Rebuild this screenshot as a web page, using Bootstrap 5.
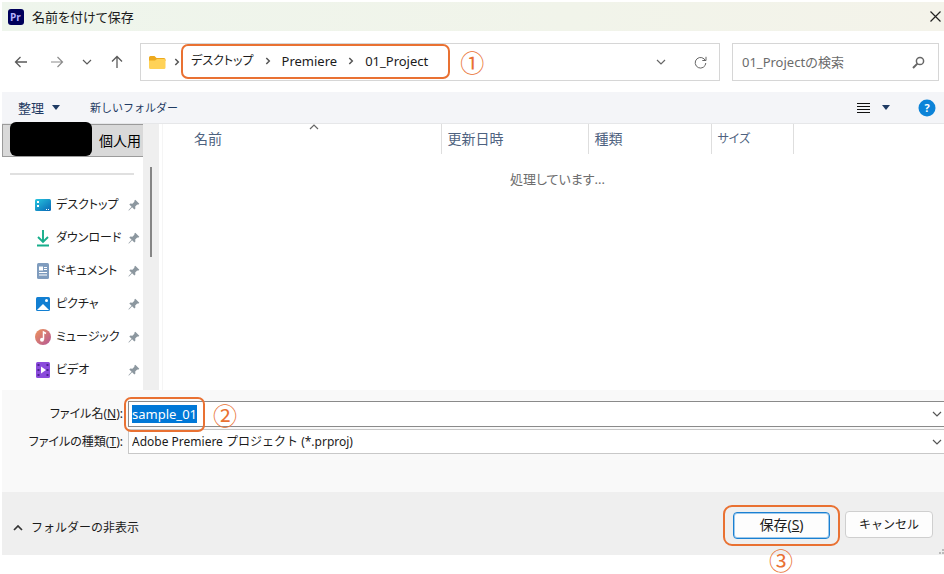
<!DOCTYPE html>
<html lang="ja">
<head>
<meta charset="utf-8">
<meta name="viewport" content="width=device-width, initial-scale=1">
<title>名前を付けて保存</title>
<link href="https://cdn.jsdelivr.net/npm/bootstrap@5.3.0/dist/css/bootstrap.min.css" rel="stylesheet">
<style>
  :root { --mark: #e97132; --navy: #1f3b63; --line: #d6d6d6; }
  body { font-family: "Noto Sans", "Noto Sans CJK JP", sans-serif; font-size: 14px; line-height: 20px; color: #1b1b1b; font-feature-settings: "palt"; background: #fff; }
  svg { display: block; flex: none; }
  .dialog { padding: 2px 0 19px 2px; }
  .title-bar { height: 29px; padding: 0 2px 0 6px; background: linear-gradient(90deg, #eef5ec, #f1f4ea 60%, #f4f3ea); }
  .title-bar h1 { font-size: 13px; line-height: 20px; }
  .tool { padding: 0; border: 0; background: none; color: inherit; line-height: 20px; }
  .kana { font-size: 12px; }
  .nav-row { padding: 12px 5px 11px 12px; gap: 12px; }
  .nav-arrows { width: 114px; gap: 18px; color: #5a5a5a; }
  .address, .search-box { height: 38px; border: 1px solid var(--line); }
  .address { padding: 0 12px 0 7px; color: #666; }
  .crumbs { height: 35px; margin: 0 10px 2px 1px; padding: 0 20px 0 8px; gap: 11px; border: 2px solid var(--mark); border-radius: 7px; list-style: none; font-size: 13px; }
  .crumbs a { color: #1b1b1b; text-decoration: none; }
  .step { color: var(--mark); font-size: 24px; line-height: 24px; font-weight: 400; font-family: "Noto Sans CJK JP", sans-serif; }
  .search-box { width: 207px; padding: 0 13px 0 9px; color: #6b6b6b; }
  .search-box input { min-width: 0; padding: 0; border: 0; outline: 0; background: none; color: inherit; font-size: 13px; }
  .search-box input::placeholder { color: #6b6b6b; opacity: 1; }
  .command-bar { height: 32px; padding: 0 8px 0 16px; background: #f4f5f8; border-bottom: 1px solid #e6e7e9; color: var(--navy); font-size: 13px; }
  .new-folder { margin-left: 30px; font-size: 11px; }
  .view-mode { gap: 12px; }
  .side { width: 141px; padding-bottom: 4px; }
  .account { height: 33px; padding: 0 0 0 96px; border: 1px solid #9b9b9b; border-right: 0; background: #d9d9d9; }
  .redaction { left: 8px; top: -2px; width: 82px; height: 34px; border-radius: 6px; background: #000; z-index: 1; }
  .side hr { margin: 16px 9px 13px 8px; border-top: 2px solid #e0e0e0; opacity: 1; }
  .place { height: 33px; padding: 0 3px 0 32px; gap: 4px; color: #1b1b1b; text-decoration: none; font-size: 12px; white-space: nowrap; }
  .track { width: 16px; background: #efefef; }
  .thumb { width: 2px; height: 90px; margin: 43px auto 0; background: #858585; }
  .files { margin: 0 0 0 3px; border-left: 1px solid #f5f5f5; }
  .file-table { table-layout: fixed; color: #4e6280; }
  .file-table th { height: 30px; padding: 0 6px; border-right: 1px solid #dedede; font-weight: 400; }
  .file-table th:first-child { padding-left: 31px; }
  .file-table th:last-child { border: 0; }
  .file-table td { padding: 15px 0 0 8px; color: #6d6d6d; font-size: 13px; }
  .c-name { width: 278px; } .c-date { width: 147px; } .c-kind { width: 123px; } .c-size { width: 82px; }
  .sort { left: 146px; top: 0; }
  .fields { padding: 11px 0 38px; background: #f9f9f9; gap: 2px; font-size: 12px; }
  .fields label { width: 126px; padding-right: 5px; text-align: right; white-space: nowrap; }
  .fields input, .fields select { width: 100%; height: 25px; padding: 0 24px 0 3px; border: 1px solid #c8c8c8; border-right: 0; background: #fff; outline: 0; appearance: none; color: #1b1b1b; }
  .fields input { height: 26px; border-color: #8a8a8a; font-size: 13px; }
  .fields input::selection { background: #0078d7; color: #fff; }
  .drop { right: 2px; top: 9px; color: #555; pointer-events: none; }
  .mark-name { left: -4px; top: -4px; width: 81px; height: 35px; border: 2px solid var(--mark); border-radius: 7px; pointer-events: none; z-index: 1; }
  .step-name { left: 85px; top: 2px; pointer-events: none; }
  .foot { height: 63px; padding: 0 11px; background: #efefef; }
  .mark-save { margin: 3px 5px 0 0; padding: 5px 8px; border: 2px solid var(--mark); border-radius: 9px; }
  .step-save { left: 44px; top: 41px; }
  .push { height: 27px; padding: 0; border: 1px solid #cfcfcf; border-radius: 4px; background: #fdfdfd; color: #1b1b1b; line-height: 20px; }
  .push-save { width: 97px; border-color: #1a80d2; box-shadow: inset 0 0 0 1px #9dc9ec; font-size: 14px; }
  .push-cancel { width: 88px; margin-top: 2px; font-size: 12px; }
  .grip { right: 0; bottom: 1px; }
</style>
<script src="https://cdn.jsdelivr.net/npm/bootstrap@5.3.0/dist/js/bootstrap.bundle.min.js"></script>
</head>
<body>
<svg class="d-none" aria-hidden="true">
  <symbol id="down" viewBox="0 0 10 8"><path d="M1 2l4 4 4-4" fill="none" stroke="currentColor" stroke-width="1.2"/></symbol>
  <symbol id="next" viewBox="0 0 6 8"><path d="M1.3 1l3 3-3 3" fill="none" stroke="#555" stroke-width="1.5"/></symbol>
  <symbol id="pin" viewBox="0 0 12 12"><path d="M7.3.7l4 4-1.2 1-.9-.1-2 2 .2 2-1 1-2.3-2.3L1 11.4l-.5.1.1-.5 3-3.2L1.3 5.500l1.100-1 2 .2 2-2-.1-1z" fill="#8c979f"/></symbol>
</svg>
<main class="dialog">
  <header class="title-bar d-flex align-items-center">
    <svg width="16" height="16" viewBox="0 0 16 16" role="img" aria-label="Premiere Pro"><rect width="16" height="16" rx="3" fill="#00005b"/><text x="2" y="11.500" font-family="Open Sans, sans-serif" font-weight="700" font-size="10" fill="#b5b0ff">Pr</text></svg>
    <h1 class="m-0 ms-2 fw-normal">名前を付けて保存</h1>
    <button type="button" class="tool ms-auto" aria-label="閉じる"><svg width="13" height="13" viewBox="0 0 13 13"><path d="M1.500 1.500l10 10M11.500 1.500l-10 10" stroke="#222" stroke-width="1.200"/></svg></button>
  </header>

  <div class="nav-row d-flex align-items-center">
    <nav class="nav-arrows d-flex align-items-center" aria-label="移動">
      <button type="button" class="tool" aria-label="戻る"><svg width="14" height="14" viewBox="0 0 14 14"><path d="M13 7H2M6.500 2l-5 5 5 5" fill="none" stroke="currentColor" stroke-width="1.300"/></svg></button>
      <button type="button" class="tool ms-1" aria-label="進む"><svg width="14" height="14" viewBox="0 0 14 14"><path d="M1 7h11M7.500 2l5 5-5 5" fill="none" stroke="#8c8c8c" stroke-width="1.200"/></svg></button>
      <button type="button" class="tool" aria-label="履歴"><svg width="10" height="8"><use href="#down"/></svg></button>
      <button type="button" class="tool" aria-label="上へ"><svg width="14" height="14" viewBox="0 0 14 14"><path d="M7 13V2M2 6.500l5-5 5 5" fill="none" stroke="currentColor" stroke-width="1.300"/></svg></button>
    </nav>
    <div class="address flex-grow-1 d-flex align-items-center">
      <svg width="18" height="15" viewBox="0 0 18 15"><path d="M1 2.500Q1 1 2.500 1h4l2 2H16q1.500 0 1.500 1.500V6H1z" fill="#eda91d"/><path d="M1 5.500h6L9 4h7q1.500 0 1.500 1.500v7Q17.500 14 16 14H2.500Q1 14 1 12.500z" fill="#ffd257"/></svg>
      <svg class="ms-2" width="6" height="8"><use href="#next"/></svg>
      <ol class="crumbs d-flex align-items-center">
        <li class="kana"><a href="#">デスクトップ</a></li>
        <li aria-hidden="true"><svg width="6" height="8"><use href="#next"/></svg></li>
        <li><a href="#">Premiere</a></li>
        <li aria-hidden="true"><svg width="6" height="8"><use href="#next"/></svg></li>
        <li><a href="#">01_Project</a></li>
      </ol>
      <span class="step">①</span>
      <button type="button" class="tool ms-auto me-4" aria-label="以前の場所"><svg width="10" height="8"><use href="#down"/></svg></button>
      <button type="button" class="tool ms-1" aria-label="更新"><svg width="13" height="13" viewBox="0 0 13 13"><path d="M11.500 5A5.300 5.300 0 1 0 11.800 7M12 .8V4.500H8.300" fill="none" stroke="currentColor"/></svg></button>
    </div>
    <div class="search-box d-flex align-items-center">
      <input class="flex-grow-1" type="text" aria-label="検索" placeholder="01_Projectの検索">
      <svg width="13" height="13" viewBox="0 0 13 13"><circle cx="8" cy="5" r="3.600" fill="none" stroke="#666" stroke-width="1.500"/><path d="M5.400 7.600L1 12" stroke="#666" stroke-width="2"/></svg>
    </div>
  </div>

  <div class="command-bar d-flex align-items-center">
    <button type="button" class="tool d-flex align-items-center gap-2">整理<svg width="8" height="5" viewBox="0 0 8 5"><path d="M0 0h8L4 5z" fill="#1f3b63"/></svg></button>
    <button type="button" class="tool new-folder">新しいフォルダー</button>
    <button type="button" class="tool view-mode ms-auto d-flex align-items-center" aria-label="表示方法"><svg width="13" height="12" viewBox="0 0 13 12"><path d="M0 1.500h13M0 4.500h13M0 7.500h13M0 10.500h13" stroke="#111"/></svg><svg width="8" height="5" viewBox="0 0 8 5"><path d="M0 0h8L4 5z" fill="#1f3b63"/></svg></button>
    <button type="button" class="tool ms-4 ps-1" aria-label="ヘルプ"><svg width="18" height="18" viewBox="0 0 18 18"><circle cx="9" cy="9" r="8.500" fill="#0c83d8"/><text x="9" y="13" text-anchor="middle" font-family="Open Sans, sans-serif" font-size="11" font-weight="700" fill="#fff">?</text></svg></button>
  </div>

  <div class="d-flex">
    <nav class="side flex-shrink-0" aria-label="場所">
      <div class="position-relative">
        <button type="button" class="account d-block w-100 text-start text-nowrap overflow-hidden">個人用</button>
        <span class="redaction position-absolute"></span>
      </div>
      <hr>
      <a href="#" class="place d-flex align-items-center"><svg width="18" height="16" viewBox="0 0 18 16"><defs><linearGradient id="g1" x2="1" y2="1"><stop stop-color="#27c7df"/><stop offset="1" stop-color="#0866b5"/></linearGradient></defs><rect x="1" y="2" width="16" height="12" rx="1.500" fill="url(#g1)"/><path d="M3 4h2v2H3zM3 8h2v2H3zM12 12h1v1h-1zM14 12h1v1h-1z" fill="#fff"/></svg>デスクトップ<svg class="ms-auto" width="12" height="12"><use href="#pin"/></svg></a>
      <a href="#" class="place d-flex align-items-center"><svg width="18" height="18" viewBox="0 0 18 18"><path d="M9 1v12M4 8l5 5 5-5M3 16.500h12" fill="none" stroke="#17ae8b" stroke-width="1.900"/></svg>ダウンロード<svg class="ms-auto" width="12" height="12"><use href="#pin"/></svg></a>
      <a href="#" class="place d-flex align-items-center"><svg width="18" height="16" viewBox="0 0 18 16"><rect x="3" width="12" height="16" rx="1.500" fill="#7f9cbe"/><path d="M5 3.500h4v4H5zM10 4h3v1h-3zM10 6h3v1h-3zM5 9h8v1H5zM5 11.500h8v1H5z" fill="#fff"/></svg>ドキュメント<svg class="ms-auto" width="12" height="12"><use href="#pin"/></svg></a>
      <a href="#" class="place d-flex align-items-center"><svg width="18" height="16" viewBox="0 0 18 16"><rect x="2" y="1" width="14" height="14" rx="1.500" fill="#127fd2"/><path d="M3 14l6-6 6 6z" fill="#fff"/><circle cx="12.500" cy="4.500" r="1.500" fill="#fff"/></svg>ピクチャ<svg class="ms-auto" width="12" height="12"><use href="#pin"/></svg></a>
      <a href="#" class="place d-flex align-items-center"><svg width="18" height="18" viewBox="0 0 18 18"><defs><linearGradient id="g2" x2="1" y2="1"><stop stop-color="#ee945b"/><stop offset="1" stop-color="#b45796"/></linearGradient></defs><circle cx="9" cy="9" r="8" fill="url(#g2)"/><path d="M9.500 11.500V4L12 5.500" fill="none" stroke="#fff" stroke-width="1.500"/><circle cx="8" cy="11.800" r="2" fill="#fff"/></svg>ミュージック<svg class="ms-auto" width="12" height="12"><use href="#pin"/></svg></a>
      <a href="#" class="place d-flex align-items-center"><svg width="18" height="16" viewBox="0 0 18 16"><rect x="2" width="14" height="16" rx="1.500" fill="#8b4bdc"/><path d="M3.500 2h2v2h-2zM3.500 7h2v2h-2zM3.500 12h2v2h-2zM12.500 2h2v2h-2zM12.500 7h2v2h-2zM12.500 12h2v2h-2z" fill="#4d2390"/><path d="M7 4.500l5 3.500-5 3.500z" fill="#fff"/></svg>ビデオ<svg class="ms-auto" width="12" height="12"><use href="#pin"/></svg></a>
    </nav>
    <div class="track flex-shrink-0"><div class="thumb"></div></div>
    <section class="files flex-grow-1 position-relative">
      <table class="file-table w-100">
        <colgroup><col class="c-name"><col class="c-date"><col class="c-kind"><col class="c-size"><col></colgroup>
        <thead><tr><th scope="col">名前</th><th scope="col">更新日時</th><th scope="col">種類</th><th scope="col" class="kana">サイズ</th><th></th></tr></thead>
        <tbody><tr><td colspan="5" class="text-center">処理しています...</td></tr></tbody>
      </table>
      <svg class="sort position-absolute" width="10" height="6" viewBox="0 0 10 6"><path d="M1 5l4-4 4 4" fill="none" stroke="#666" stroke-width="1.200"/></svg>
    </section>
  </div>

  <form onsubmit="return false">
    <div class="fields d-flex flex-column">
      <div class="d-flex align-items-center">
        <label for="fname">ファイル名(<u>N</u>):</label>
        <div class="position-relative flex-grow-1">
          <input id="fname" class="d-block" type="text" value="sample_01" autocomplete="off">
          <svg class="drop position-absolute" width="10" height="8"><use href="#down"/></svg>
          <span class="mark-name position-absolute"></span>
          <span class="step step-name position-absolute">②</span>
        </div>
      </div>
      <div class="d-flex align-items-center">
        <label for="ftype">ファイルの種類(<u>T</u>):</label>
        <div class="position-relative flex-grow-1">
          <select id="ftype" class="d-block"><option>Adobe Premiere プロジェクト (*.prproj)</option></select>
          <svg class="drop position-absolute" width="10" height="8"><use href="#down"/></svg>
        </div>
      </div>
    </div>
    <footer class="foot d-flex align-items-center position-relative">
      <button type="button" class="tool kana d-flex align-items-center gap-2 mt-2"><svg width="10" height="6" viewBox="0 0 10 6"><path d="M1 5l4-4 4 4" fill="none" stroke="#333" stroke-width="1.700"/></svg>フォルダーの非表示</button>
      <div class="mark-save position-relative ms-auto">
        <button type="submit" class="push push-save d-block">保存(<u>S</u>)</button>
        <span class="step step-save position-absolute">③</span>
      </div>
      <button type="button" class="push push-cancel">キャンセル</button>
      <svg class="grip position-absolute" width="5" height="5" viewBox="0 0 5 5"><path d="M3 0h2v2H3zM0 3h2v2H0zM3 3h2v2H3z" fill="#bbb"/></svg>
    </footer>
  </form>
</main>
<script>
  const nameField = document.getElementById('fname');
  nameField.focus();
  nameField.select();
</script>
</body>
</html>
